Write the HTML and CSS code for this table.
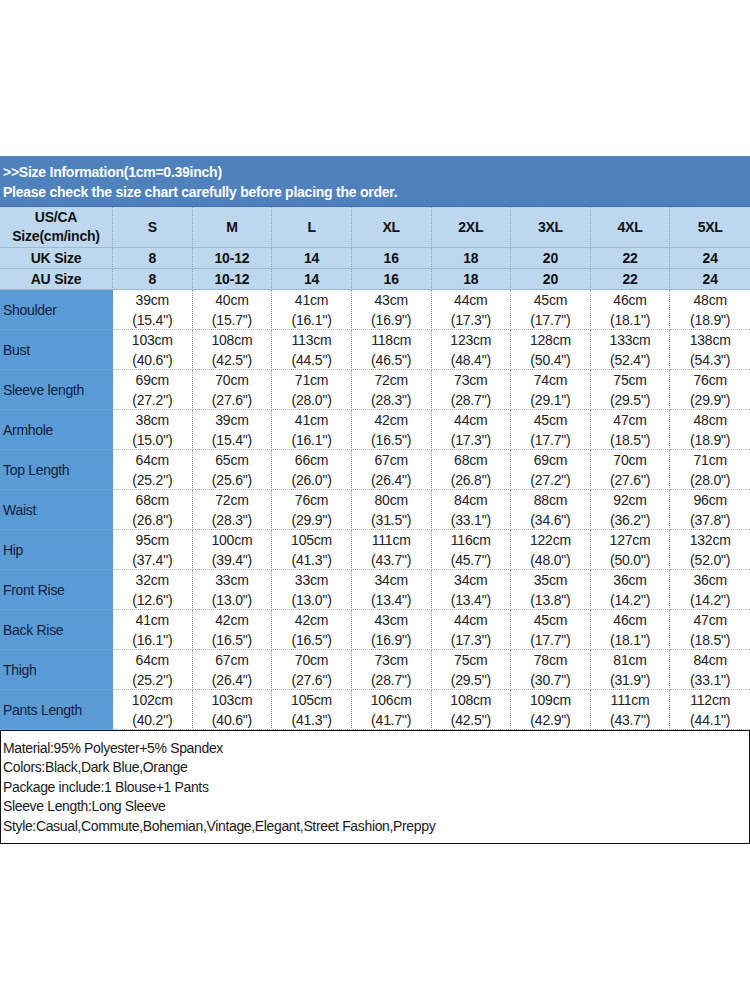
FILE: index.html
```html
<!DOCTYPE html>
<html>
<head>
<meta charset="utf-8">
<link rel="stylesheet" href="styles.css">
</head>
<body>
<div class="page">
  <div class="chart">
    <div class="title">&gt;&gt;Size Information(1cm=0.39inch)<br>Please check the size chart carefully before placing the order.</div>

    <div class="size us first">US/CA<br>Size(cm/inch)</div>
    <div class="size us">S</div><div class="size us">M</div><div class="size us">L</div><div class="size us">XL</div><div class="size us">2XL</div><div class="size us">3XL</div><div class="size us">4XL</div><div class="size us last">5XL</div>

    <div class="size first">UK Size</div>
    <div class="size">8</div><div class="size">10-12</div><div class="size">14</div><div class="size">16</div><div class="size">18</div><div class="size">20</div><div class="size">22</div><div class="size last">24</div>

    <div class="size first">AU Size</div>
    <div class="size">8</div><div class="size">10-12</div><div class="size">14</div><div class="size">16</div><div class="size">18</div><div class="size">20</div><div class="size">22</div><div class="size last">24</div>

    <div class="label">Shoulder</div>
    <div class="cell">39cm<br>(15.4")</div><div class="cell">40cm<br>(15.7")</div><div class="cell">41cm<br>(16.1")</div><div class="cell">43cm<br>(16.9")</div><div class="cell">44cm<br>(17.3")</div><div class="cell">45cm<br>(17.7")</div><div class="cell">46cm<br>(18.1")</div><div class="cell last">48cm<br>(18.9")</div>

    <div class="label">Bust</div>
    <div class="cell">103cm<br>(40.6")</div><div class="cell">108cm<br>(42.5")</div><div class="cell">113cm<br>(44.5")</div><div class="cell">118cm<br>(46.5")</div><div class="cell">123cm<br>(48.4")</div><div class="cell">128cm<br>(50.4")</div><div class="cell">133cm<br>(52.4")</div><div class="cell last">138cm<br>(54.3")</div>

    <div class="label">Sleeve length</div>
    <div class="cell">69cm<br>(27.2")</div><div class="cell">70cm<br>(27.6")</div><div class="cell">71cm<br>(28.0")</div><div class="cell">72cm<br>(28.3")</div><div class="cell">73cm<br>(28.7")</div><div class="cell">74cm<br>(29.1")</div><div class="cell">75cm<br>(29.5")</div><div class="cell last">76cm<br>(29.9")</div>

    <div class="label">Armhole</div>
    <div class="cell">38cm<br>(15.0")</div><div class="cell">39cm<br>(15.4")</div><div class="cell">41cm<br>(16.1")</div><div class="cell">42cm<br>(16.5")</div><div class="cell">44cm<br>(17.3")</div><div class="cell">45cm<br>(17.7")</div><div class="cell">47cm<br>(18.5")</div><div class="cell last">48cm<br>(18.9")</div>

    <div class="label">Top Length</div>
    <div class="cell">64cm<br>(25.2")</div><div class="cell">65cm<br>(25.6")</div><div class="cell">66cm<br>(26.0")</div><div class="cell">67cm<br>(26.4")</div><div class="cell">68cm<br>(26.8")</div><div class="cell">69cm<br>(27.2")</div><div class="cell">70cm<br>(27.6")</div><div class="cell last">71cm<br>(28.0")</div>

    <div class="label">Waist</div>
    <div class="cell">68cm<br>(26.8")</div><div class="cell">72cm<br>(28.3")</div><div class="cell">76cm<br>(29.9")</div><div class="cell">80cm<br>(31.5")</div><div class="cell">84cm<br>(33.1")</div><div class="cell">88cm<br>(34.6")</div><div class="cell">92cm<br>(36.2")</div><div class="cell last">96cm<br>(37.8")</div>

    <div class="label">Hip</div>
    <div class="cell">95cm<br>(37.4")</div><div class="cell">100cm<br>(39.4")</div><div class="cell">105cm<br>(41.3")</div><div class="cell">111cm<br>(43.7")</div><div class="cell">116cm<br>(45.7")</div><div class="cell">122cm<br>(48.0")</div><div class="cell">127cm<br>(50.0")</div><div class="cell last">132cm<br>(52.0")</div>

    <div class="label">Front Rise</div>
    <div class="cell">32cm<br>(12.6")</div><div class="cell">33cm<br>(13.0")</div><div class="cell">33cm<br>(13.0")</div><div class="cell">34cm<br>(13.4")</div><div class="cell">34cm<br>(13.4")</div><div class="cell">35cm<br>(13.8")</div><div class="cell">36cm<br>(14.2")</div><div class="cell last">36cm<br>(14.2")</div>

    <div class="label">Back Rise</div>
    <div class="cell">41cm<br>(16.1")</div><div class="cell">42cm<br>(16.5")</div><div class="cell">42cm<br>(16.5")</div><div class="cell">43cm<br>(16.9")</div><div class="cell">44cm<br>(17.3")</div><div class="cell">45cm<br>(17.7")</div><div class="cell">46cm<br>(18.1")</div><div class="cell last">47cm<br>(18.5")</div>

    <div class="label">Thigh</div>
    <div class="cell">64cm<br>(25.2")</div><div class="cell">67cm<br>(26.4")</div><div class="cell">70cm<br>(27.6")</div><div class="cell">73cm<br>(28.7")</div><div class="cell">75cm<br>(29.5")</div><div class="cell">78cm<br>(30.7")</div><div class="cell">81cm<br>(31.9")</div><div class="cell last">84cm<br>(33.1")</div>

    <div class="label">Pants Length</div>
    <div class="cell">102cm<br>(40.2")</div><div class="cell">103cm<br>(40.6")</div><div class="cell">105cm<br>(41.3")</div><div class="cell">106cm<br>(41.7")</div><div class="cell">108cm<br>(42.5")</div><div class="cell">109cm<br>(42.9")</div><div class="cell">111cm<br>(43.7")</div><div class="cell last">112cm<br>(44.1")</div>
  </div>

  <div class="notes">
    <p>Material:95% Polyester+5% Spandex</p>
    <p>Colors:Black,Dark Blue,Orange</p>
    <p>Package include:1 Blouse+1 Pants</p>
    <p>Sleeve Length:Long Sleeve</p>
    <p>Style:Casual,Commute,Bohemian,Vintage,Elegant,Street Fashion,Preppy</p>
  </div>
</div>
</body>
</html>
```

FILE: styles.css
```css
html, body {
  margin: 0;
  padding: 0;
  background: #ffffff;
}

.page {
  width: 750px;
  padding-top: 156px;
  font-family: "Liberation Sans", Arial, sans-serif;
  font-size: 14px;
  color: #1a1a1a;
}

.chart {
  display: grid;
  grid-template-columns: 113px repeat(8, 1fr);
  grid-auto-rows: 40px;
  grid-template-rows: 51px 41px 21px 21px;
}

.title {
  grid-column: 1 / -1;
  background: #4f81bd;
  color: #ffffff;
  font-weight: bold;
  line-height: 20px;
  letter-spacing: -0.25px;
  padding: 6px 0 0 3px;
  box-sizing: border-box;
  border-bottom: 1px solid #3f6ea8;
}

.size {
  background: #bdd7ee;
  font-weight: bold;
  color: #111;
  display: flex;
  align-items: center;
  justify-content: center;
  text-align: center;
  line-height: 19px;
  letter-spacing: -0.2px;
  border-right: 1px dotted #8aa4c0;
  border-bottom: 1px solid #9fb8d4;
  box-sizing: border-box;
}

.size.last, .cell.last {
  border-right: none;
}

.label {
  background: #5b9bd5;
  color: #0e1e3c;
  display: flex;
  align-items: center;
  padding-left: 3px;
  letter-spacing: -0.3px;
  border-bottom: 1px dotted #7fb0de;
  box-sizing: border-box;
}

.cell {
  background: #ffffff;
  color: #222;
  text-align: center;
  line-height: 20px;
  letter-spacing: -0.2px;
  border-right: 1px dotted #9a9a9a;
  border-bottom: 1px dotted #b5b5b5;
  box-sizing: border-box;
}

.notes {
  border: 1.5px solid #111;
  width: 750px;
  height: 114px;
  box-sizing: border-box;
  padding: 8px 0 0 2px;
  color: #1a1a1a;
  letter-spacing: -0.35px;
}

.notes p {
  margin: 0;
  line-height: 19.4px;
}
```
